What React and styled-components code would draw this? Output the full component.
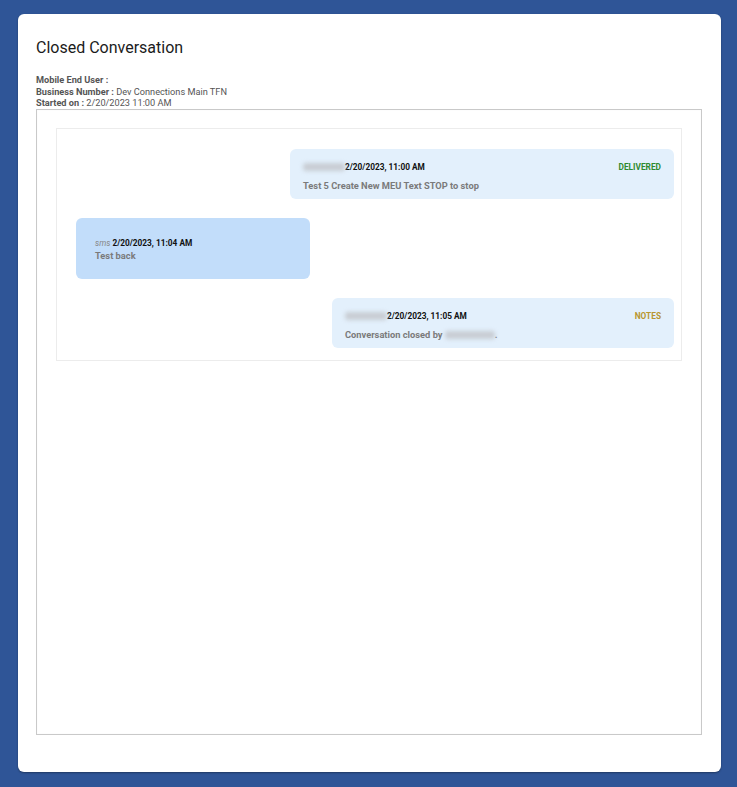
import React from 'react'
import styled, { createGlobalStyle } from 'styled-components'

const GlobalStyle = createGlobalStyle`
	html, body {
		margin: 0;
		padding: 0;
		background: #2f5597;
		font-family: Roboto, 'Liberation Sans', sans-serif;
	}
`

const Backdrop = styled.div`
	width: 737px;
	height: 787px;
	padding: 14px 16px 15px 18px;
	box-sizing: border-box;
	background: #2f5597;
`

const Modal = styled.div`
	height: 100%;
	background: #fff;
	border-radius: 6px;
	box-shadow: 0 1px 2px rgba(0, 0, 0, 0.35);
	padding: 24px 19px 37px 18px;
	box-sizing: border-box;
	display: flex;
	flex-direction: column;
`

const Title = styled.h2`
	margin: 0 0 16px;
	font-size: 16px;
	font-weight: 400;
	line-height: 20px;
	color: #1b1b1b;
`

const InfoLine = styled.div`
	font-size: 9.2px;
	line-height: 11.5px;
	color: #555;
	b {
		font-weight: 700;
		color: #555;
	}
`

const Transcript = styled.div`
	flex: 1;
	border: 1px solid #c9c9c9;
	box-shadow: inset 0 0 1px rgba(0, 0, 0, 0.08);
	padding: 18px 19px;
`

const Thread = styled.div`
	border: 1px solid #ececec;
	padding: 20px 7px 12px 19px;
	display: flex;
	flex-direction: column;
	gap: 19px;
`

const Bubble = styled.div`
	align-self: ${(p) => (p.$inbound ? 'flex-start' : 'flex-end')};
	width: ${(p) => p.$width}px;
	box-sizing: border-box;
	background: ${(p) => (p.$inbound ? '#c2ddfa' : '#e3f0fc')};
	border-radius: 6px;
	padding: ${(p) => (p.$inbound ? '19px 19px 17px' : '12px 13px 7px')};
	display: flex;
	flex-direction: column;
	gap: ${(p) => (p.$inbound ? '1px' : '7px')};
`

const BubbleHead = styled.div`
	display: flex;
	align-items: center;
	justify-content: space-between;
	height: 12px;
`

const Stamp = styled.span`
	display: flex;
	align-items: center;
	font-size: 8.3px;
	font-weight: 700;
	color: #111;
`

const Channel = styled.span`
	font-style: italic;
	font-weight: 400;
	color: #888;
	margin-right: 2px;
`

const Blur = styled.span`
	display: inline-block;
	width: ${(p) => p.$w}px;
	height: 8px;
	background: #c8cdd3;
	border-radius: 3px;
	filter: blur(2px);
	vertical-align: middle;
`

const Status = styled.span`
	font-size: 8.3px;
	font-weight: 700;
	color: ${(p) => p.$color};
`

const BubbleText = styled.div`
	display: flex;
	align-items: center;
	font-size: 9.3px;
	font-weight: 700;
	line-height: 12px;
	color: #7a7a7a;
`

export default function App() {
	return (
		<>
			<GlobalStyle />
			<Backdrop>
				<Modal>
					<Title>Closed Conversation</Title>
					<InfoLine>
						<b>Mobile End User :</b>
					</InfoLine>
					<InfoLine>
						<b>Business Number :</b> Dev Connections Main TFN
					</InfoLine>
					<InfoLine>
						<b>Started on :</b> 2/20/2023 11:00 AM
					</InfoLine>
					<Transcript>
						<Thread>
							<Bubble $width={384}>
								<BubbleHead>
									<Stamp>
										<Blur $w={42} />
										2/20/2023, 11:00 AM
									</Stamp>
									<Status $color='#2f8a2f'>DELIVERED</Status>
								</BubbleHead>
								<BubbleText>Test 5 Create New MEU Text STOP to stop</BubbleText>
							</Bubble>
							<Bubble $inbound $width={234}>
								<BubbleHead>
									<Stamp>
										<Channel>sms</Channel>
										2/20/2023, 11:04 AM
									</Stamp>
								</BubbleHead>
								<BubbleText>Test back</BubbleText>
							</Bubble>
							<Bubble $width={342}>
								<BubbleHead>
									<Stamp>
										<Blur $w={42} />
										2/20/2023, 11:05 AM
									</Stamp>
									<Status $color='#b8962e'>NOTES</Status>
								</BubbleHead>
								<BubbleText>
									Conversation closed by&nbsp;<Blur $w={50} />.
								</BubbleText>
							</Bubble>
						</Thread>
					</Transcript>
				</Modal>
			</Backdrop>
		</>
	)
}
